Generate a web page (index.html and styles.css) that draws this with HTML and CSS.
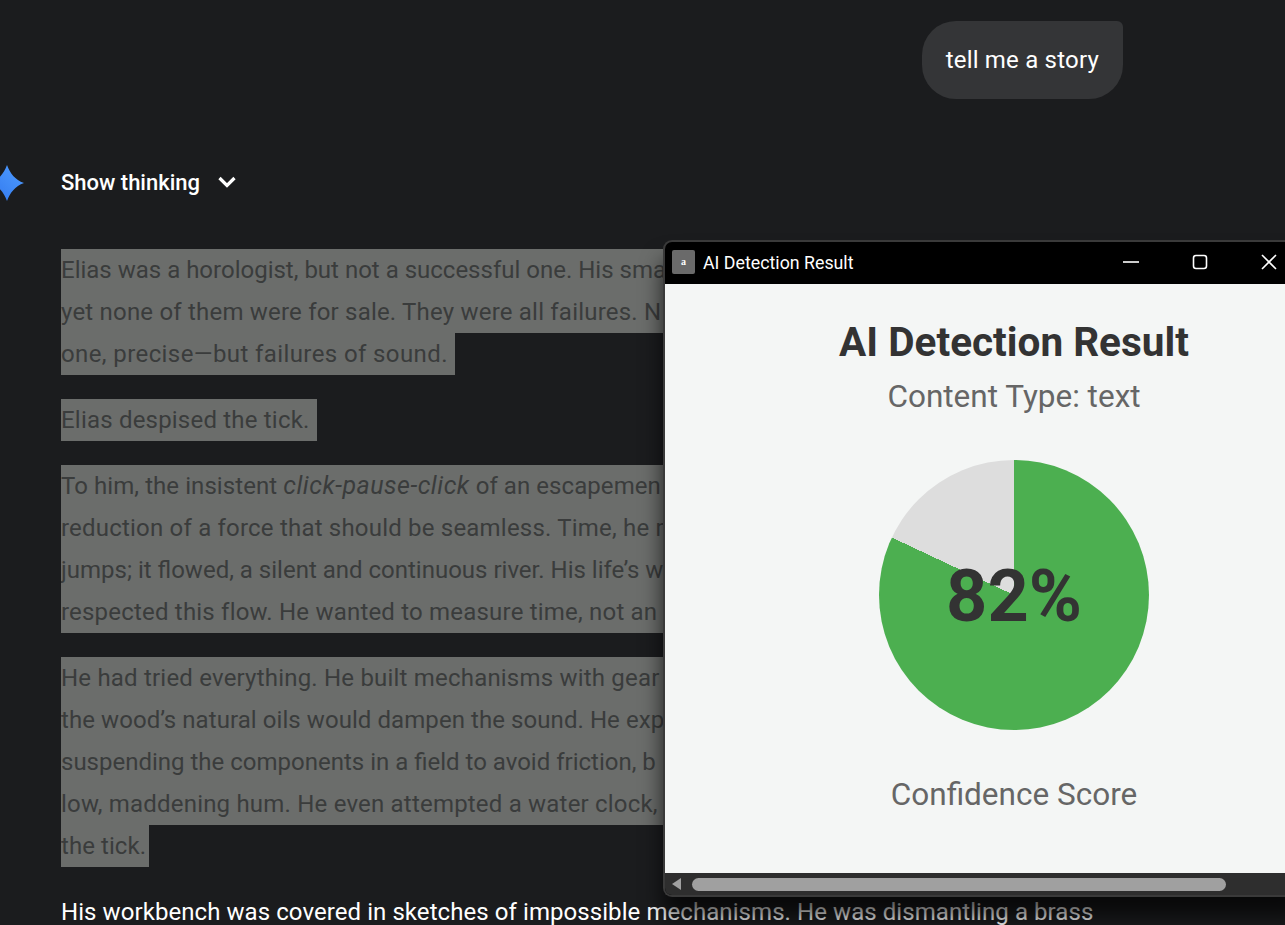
FILE: index.html
```html
<!DOCTYPE html>
<html lang="en">
<head>
    <meta charset="UTF-8">
    <title>AI Detection Result</title>
    <link rel="stylesheet" href="styles.css">
</head>
<body>

<div class="chat">
    <div class="user-row">
        <div class="user-bubble">tell me a story</div>
    </div>

    <div class="thinking-row">
        <svg class="spark" width="34" height="36" viewBox="0 0 34 36">
            <defs>
                <linearGradient id="sparkFill" x1="0" y1="1" x2="1" y2="0">
                    <stop offset="0" stop-color="#3177ee"/>
                    <stop offset="1" stop-color="#4f9dff"/>
                </linearGradient>
            </defs>
            <path d="M7 0C10 8 15 15 24 18C15 21 10 28 7 36C4 28-1 21-10 18C-1 15 4 8 7 0Z" fill="url(#sparkFill)"/>
        </svg>
        <span class="thinking-label">Show thinking</span>
        <svg class="chevron" width="20" height="20" viewBox="0 0 20 20">
            <path d="M2.5 6L10 13.5L17.5 6" fill="none" stroke="#fff" stroke-width="3.2"/>
        </svg>
    </div>

    <div class="answer">
        <p class="para">
            <span class="sel cut tight">Elias was a horologist, but not a successful one. His sma</span>
            <span class="sel cut wide">yet none of them were for sale. They were all failures. N</span>
            <span class="sel loose">one, precise—but failures of sound.</span>
        </p>
        <p class="para">
            <span class="sel wide">Elias despised the tick.</span>
        </p>
        <p class="para">
            <span class="sel cut">To him, the insistent <em>click-pause-click</em> of an escapemen</span>
            <span class="sel cut wide">reduction of a force that should be seamless. Time, he r</span>
            <span class="sel cut tight">jumps; it flowed, a silent and continuous river. His life’s w</span>
            <span class="sel cut wide">respected this flow. He wanted to measure time, not an</span>
        </p>
        <p class="para">
            <span class="sel cut wide">He had tried everything. He built mechanisms with gear</span>
            <span class="sel cut">the wood’s natural oils would dampen the sound. He exp</span>
            <span class="sel cut tight">suspending the components in a field to avoid friction, b</span>
            <span class="sel cut wide">low, maddening hum. He even attempted a water clock,</span>
            <span class="sel short">the tick.</span>
        </p>
        <p class="para">
            <span class="plain">His workbench was covered in sketches of impossible mechanisms. He was dismantling a brass</span>
        </p>
    </div>
</div>

<div class="window">
    <div class="titlebar">
        <div class="app-icon">a</div>
        <div class="win-title">AI Detection Result</div>
        <div class="win-buttons">
            <svg width="16" height="16" viewBox="0 0 16 16"><path d="M0 8H16" stroke="#fff" stroke-width="1.6"/></svg>
            <svg width="16" height="16" viewBox="0 0 16 16"><rect x="1.5" y="1.5" width="13" height="13" rx="2.5" fill="none" stroke="#fff" stroke-width="1.6"/></svg>
            <svg width="16" height="16" viewBox="0 0 16 16"><path d="M1 1L15 15M15 1L1 15" stroke="#fff" stroke-width="1.6"/></svg>
        </div>
    </div>
    <div class="result">
        <h1 class="result-title">AI Detection Result</h1>
        <div class="content-type">Content Type: text</div>
        <div class="pie">
            <span class="pie-value">82%</span>
        </div>
        <div class="pie-label">Confidence Score</div>
    </div>
    <div class="scrollbar">
        <svg width="12" height="14" viewBox="0 0 12 14"><path d="M11 1V13L2 7Z" fill="#a0a0a0"/></svg>
        <div class="scroll-thumb"></div>
    </div>
</div>

</body>
</html>
```

FILE: styles.css
```css
html, body {
    height: 100%;
}

body {
    margin: 0;
    background-color: #1b1c1e;
    color: #ffffff;
    font-family: Roboto, "Open Sans", sans-serif;
    overflow: hidden;
}

.chat {
    padding: 21px 0 0 61px;
}

.user-row {
    display: flex;
    width: 1062px;
    justify-content: flex-end;
}

.user-bubble {
    background-color: #343537;
    border-radius: 34px 6px 34px 34px;
    padding: 0 24px;
    height: 78px;
    line-height: 78px;
    font-size: 24px;
    letter-spacing: 0.2px;
}

.thinking-row {
    display: flex;
    align-items: center;
    height: 36px;
    margin-top: 65px;
    position: relative;
}

.spark {
    position: absolute;
    left: -61px;
    top: 1px;
    overflow: visible;
}

.thinking-label {
    font-size: 22px;
    font-weight: 500;
}

.chevron {
    margin-left: 17px;
}

.answer {
    margin-top: 49px;
    width: 1100px;
}

.para {
    margin: 0 0 24px;
    font-size: 24px;
    line-height: 42px;
    letter-spacing: 0.07px;
}

.para em {
    font-size: 25px;
    letter-spacing: 0.5px;
}

.sel {
    display: block;
    width: fit-content;
    padding-right: 7px;
    background-color: #6b6d6b;
    color: #3a3c3c;
    white-space: nowrap;
}

/* line runs on under the popup, only the visible part is here */
.sel.cut {
    width: 606px;
    padding-right: 0;
    overflow: hidden;
}

.sel.short {
    padding-right: 3px;
}

.sel.tight {
    letter-spacing: 0;
}

.sel.wide {
    letter-spacing: 0.2px;
}

.sel.loose {
    letter-spacing: 0.4px;
}

.plain {
    display: block;
    white-space: nowrap;
}

/* popup window over the chat */
.window {
    position: absolute;
    left: 663px;
    top: 240px;
    width: 640px;
    height: 657px;
    display: flex;
    flex-direction: column;
    background-color: #000000;
    border: 2px solid #3a3a3a;
    border-right: none;
    border-radius: 9px 0 0 9px;
    box-sizing: border-box;
    box-shadow: 0 20px 22px rgba(0, 0, 0, 0.7);
    overflow: hidden;
}

.titlebar {
    display: flex;
    align-items: center;
    height: 42px;
    padding: 0 0 2px 7px;
    box-sizing: border-box;
    flex-shrink: 0;
}

.app-icon {
    width: 23px;
    height: 24px;
    background-color: #6a6a6a;
    border-radius: 2px;
    color: #ffffff;
    font-family: "Liberation Serif", serif;
    font-size: 10px;
    font-weight: bold;
    text-align: center;
    line-height: 24px;
}

.win-title {
    margin-left: 8px;
    font-size: 17.8px;
    flex-grow: 1;
}

.win-buttons {
    display: flex;
    gap: 53px;
    width: 180px;
    padding-right: 26px;
    box-sizing: border-box;
}

.result {
    flex-grow: 1;
    background-color: #f4f6f5;
    width: 698px;
    text-align: center;
    padding-top: 34px;
    box-sizing: border-box;
}

.result-title {
    margin: 0;
    font-size: 40.5px;
    line-height: 48px;
    font-weight: bold;
    color: #333333;
}

.content-type {
    margin-top: 13px;
    font-size: 31.5px;
    line-height: 36px;
    color: #666666;
}

.pie {
    position: relative;
    width: 270px;
    height: 270px;
    margin: 45px auto 0;
    border-radius: 50%;
    background: conic-gradient(#4caf50 0 82%, #dddddd 82% 100%);
}

.pie-value {
    position: absolute;
    left: 0;
    right: 0;
    top: calc(50% + 2px);
    transform: translateY(-50%);
    font-size: 72px;
    font-weight: bold;
    line-height: 72px;
    color: #333333;
}

.pie-label {
    margin-top: 45px;
    font-size: 31.5px;
    line-height: 40px;
    color: #666666;
}

.scrollbar {
    display: flex;
    align-items: center;
    height: 22px;
    flex-shrink: 0;
    background-color: #2e2e2e;
    padding-left: 5px;
}

.scroll-thumb {
    width: 534px;
    height: 13px;
    margin-left: 10px;
    border-radius: 7px;
    background-color: #a0a0a0;
}
```
